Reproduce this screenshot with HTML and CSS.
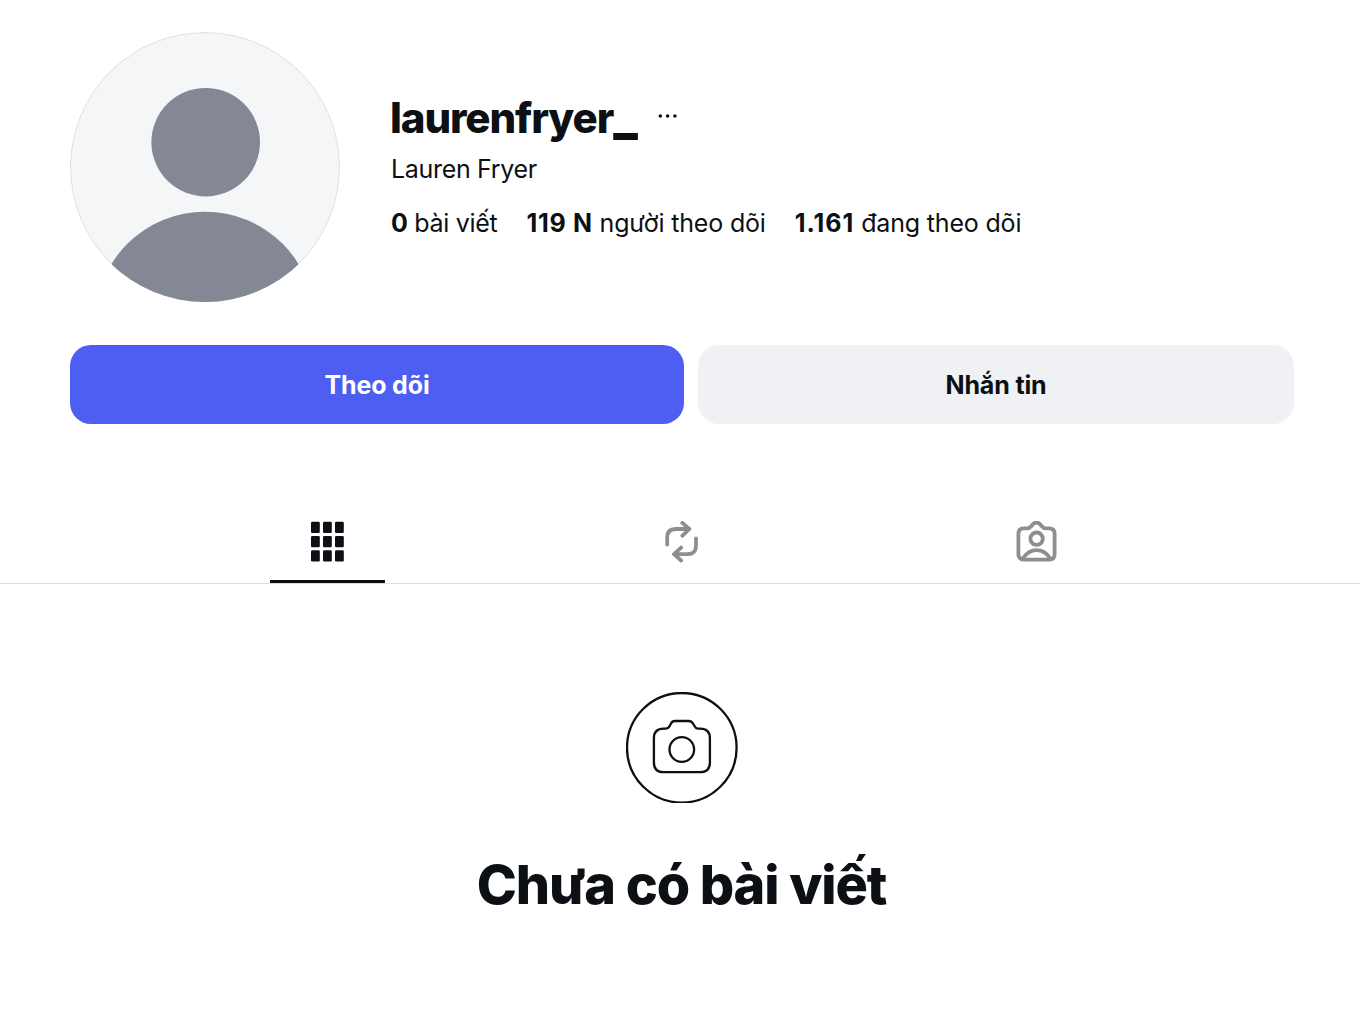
FILE: index.html
```html
<!DOCTYPE html>
<html lang="vi">
<head>
    <meta charset="UTF-8">
    <meta name="viewport" content="width=device-width, initial-scale=1.0">
    <title>laurenfryer_</title>
    <link rel="stylesheet" href="styles.css">
</head>
<body>
    <header class="profile">
        <svg class="avatar" viewBox="0 0 270 270">
            <circle class="rim" cx="135" cy="135" r="134.5"/>
            <circle cx="135.7" cy="110.2" r="54.3"/>
            <circle cx="135" cy="289.5" r="109.8"/>
        </svg>
        <div class="info">
            <div class="name-row">
                <h1 class="username">laurenfryer<span class="underscore">_</span></h1>
                <svg class="more" viewBox="0 0 20 6">
                    <circle cx="2.3" cy="3" r="1.8"/>
                    <circle cx="9.6" cy="3" r="1.8"/>
                    <circle cx="16.9" cy="3" r="1.8"/>
                </svg>
            </div>
            <div class="full-name">Lauren Fryer</div>
            <div class="stats">
                <span class="posts"><b>0</b> bài viết</span>
                <span class="followers"><b>119 N</b> người theo dõi</span>
                <span class="following"><b>1.161</b> đang theo dõi</span>
            </div>
        </div>
    </header>

    <div class="actions">
        <button type="button" class="follow">Theo dõi</button>
        <button type="button" class="message">Nhắn tin</button>
    </div>

    <nav class="tabs">
        <a class="tab active">
            <svg width="34" height="42" viewBox="0 0 34 42">
                <rect x="0" y="0.8" width="8.8" height="11.2" rx="1.2"/>
                <rect x="12" y="0.8" width="8.8" height="11.2" rx="1.2"/>
                <rect x="24" y="0.8" width="8.8" height="11.2" rx="1.2"/>
                <rect x="0" y="15" width="8.8" height="11.2" rx="1.2"/>
                <rect x="12" y="15" width="8.8" height="11.2" rx="1.2"/>
                <rect x="24" y="15" width="8.8" height="11.2" rx="1.2"/>
                <rect x="0" y="29.3" width="8.8" height="11.2" rx="1.2"/>
                <rect x="12" y="29.3" width="8.8" height="11.2" rx="1.2"/>
                <rect x="24" y="29.3" width="8.8" height="11.2" rx="1.2"/>
            </svg>
        </a>
        <a class="tab">
            <svg class="line" width="34" height="42" viewBox="0 0 34 42">
                <path d="M2.2 23.5V16.4Q2.2 8 10.6 8H24.5M17.3 1.9L24.3 8L17.3 14.8M31 17.5V24.8Q31 33.2 22.6 33.2H9.5M16.1 26.6L9 33.2L16.1 39.5"/>
            </svg>
        </a>
        <a class="tab">
            <svg class="line" width="42" height="42" viewBox="0 0 42 42">
                <path d="M7.8 7.4H11Q13.4 7.4 14.8 5.6L17.3 2.9Q20.5 0.2 23.7 2.9L26.2 5.6Q27.6 7.4 30 7.4H33.2Q38.6 7.4 38.6 12.8V33.2Q38.6 38.6 33.2 38.6H8.4Q2.4 38.6 2.4 33.2V12.8Q2.4 7.4 7.8 7.4Z"/>
                <circle cx="20.6" cy="17.7" r="6.2"/>
                <path d="M6.6 37.6C10.4 32 15 29.1 20.6 29.1S30.8 32 34.6 37.6"/>
            </svg>
        </a>
    </nav>

    <main class="empty">
        <svg class="camera" width="112" height="111" viewBox="0 0 112 111">
            <circle cx="55.8" cy="55.8" r="54.8"/>
            <circle cx="55.8" cy="57.5" r="12.3"/>
            <path d="M48.8 29H62.4Q65.6 29 67.2 31.8L69 34.7Q70 36.6 72.2 36.6H74.2Q83.9 36.6 83.9 46.3V70.4Q83.9 80.1 74.2 80.1H37.6Q27.9 80.1 27.9 70.4V46.3Q27.9 36.6 37.6 36.6H40Q42.2 36.6 43.3 34.7L44.8 31.8Q46.2 29 48.8 29Z"/>
        </svg>
        <h2 class="empty-title">Chưa có bài viết</h2>
    </main>
</body>
</html>
```

FILE: styles.css
```css
body {
    margin: 0;
    background-color: #fff;
    color: #0c1014;
    font-family: Inter, "Noto Sans", sans-serif;
    font-size: 25px;
}
h1, h2 {
    margin: 0;
}
b {
    font-weight: 700;
}
svg {
    fill: #0c1014;
}
.profile {
    display: flex;
    gap: 51px;
    padding: 32px 70px 0;
}
.avatar {
    flex: none;
    width: 270px;
    height: 270px;
    border-radius: 50%;
    fill: #848894;
}
.rim {
    fill: #f4f6f8;
    stroke: #d9dddc;
}
.info {
    padding-top: 60px;
}
.name-row {
    display: flex;
    align-items: center;
    gap: 20px;
    height: 52px;
}
.username {
    margin-left: -1px;
    font-size: 42px;
    font-weight: 800;
    line-height: 52px;
    letter-spacing: -1.1px;
}
.underscore {
    font-size: 50px;
    font-weight: 900;
    line-height: 1px;
    letter-spacing: 0;
}
.more {
    width: 20px;
    height: 6px;
    margin-bottom: 4px;
}
.full-name {
    margin-top: 10px;
    line-height: 30px;
    letter-spacing: -0.32px;
}
.stats {
    display: flex;
    gap: 29px;
    margin-top: 24px;
    line-height: 30px;
    letter-spacing: -0.18px;
    white-space: nowrap;
}
.posts {
    letter-spacing: -0.3px;
}
.followers b {
    letter-spacing: 0.7px;
}
.following b {
    letter-spacing: 1px;
}
.actions {
    display: flex;
    gap: 14px;
    padding: 43px 66px 0 70px;
}
button {
    height: 79px;
    padding: 0;
    border: none;
    border-radius: 21px;
    font-family: inherit;
    font-size: 25px;
    font-weight: 700;
    letter-spacing: -0.15px;
    cursor: pointer;
}
.follow {
    width: 614px;
    background-color: #4e5ef2;
    color: #fff;
}
.message {
    width: 596px;
    background-color: #f0f1f5;
    color: #0c1014;
}
.tabs {
    display: flex;
    justify-content: center;
    gap: 239.5px;
    height: 83px;
    margin-top: 76px;
    padding-left: 4px;
    border-bottom: 1px solid #dbdfe4;
}
.tab {
    display: flex;
    align-items: center;
    justify-content: center;
    box-sizing: border-box;
    width: 115px;
    padding-top: 3px;
    border-bottom: 3px solid transparent;
}
.tab.active {
    border-color: #0c1014;
}
.line {
    fill: none;
    stroke: #8e8e8e;
    stroke-width: 3.8;
    stroke-linecap: round;
    stroke-linejoin: round;
}
.empty {
    display: flex;
    flex-direction: column;
    align-items: center;
    padding: 108px 0 0 3px;
}
.camera {
    fill: none;
    stroke: #0c1014;
    stroke-width: 2.3;
}
.empty-title {
    margin-top: 47px;
    font-size: 54px;
    font-weight: 800;
    line-height: 70px;
    letter-spacing: -1.1px;
}
```
